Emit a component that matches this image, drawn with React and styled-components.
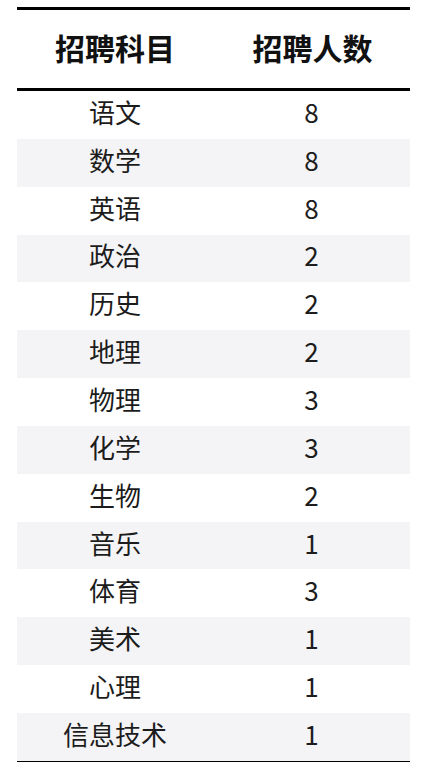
import styled, { createGlobalStyle } from 'styled-components';

const GlobalStyle = createGlobalStyle`
  html, body {
    margin: 0;
    padding: 0;
    background: #ffffff;
  }
  body {
    font-family: "Noto Sans CJK SC", "Noto Sans", sans-serif;
    color: #1a1a1a;
  }
`;

const Page = styled.div`
  width: 430px;
  height: 775px;
  padding: 7px 20px 0 17px;
  box-sizing: border-box;
`;

const Table = styled.div`
  width: 393px;
  border-top: 3px solid #000;
  border-bottom: 1px solid #000;
`;

const HeaderRow = styled.div`
  display: grid;
  grid-template-columns: 196px 197px;
  height: 78px;
  align-items: center;
  border-bottom: 3px solid #000;
`;

const HeadCell = styled.div`
  text-align: center;
  font-size: 30px;
  font-weight: 700;
  line-height: 1;
  color: #111;
  padding-bottom: 4px;
  padding-left: ${(p) => (p.$right ? '2px' : '0')};
`;

const Row = styled.div`
  display: grid;
  grid-template-columns: 196px 197px;
  height: 47.85px;
  align-items: center;
  background: ${(p) => (p.$shade ? '#f4f4f6' : '#ffffff')};
`;

const Cell = styled.div`
  text-align: center;
  font-size: 26px;
  font-weight: 400;
  line-height: 1;
  color: #1c1c1c;
  padding-bottom: 6px;
`;

const rows = [
  ['语文', 8],
  ['数学', 8],
  ['英语', 8],
  ['政治', 2],
  ['历史', 2],
  ['地理', 2],
  ['物理', 3],
  ['化学', 3],
  ['生物', 2],
  ['音乐', 1],
  ['体育', 3],
  ['美术', 1],
  ['心理', 1],
  ['信息技术', 1],
];

export default function App() {
  return (
    <Page>
      <GlobalStyle />
      <Table>
        <HeaderRow>
          <HeadCell>招聘科目</HeadCell>
          <HeadCell $right>招聘人数</HeadCell>
        </HeaderRow>
        {rows.map(([name, n], i) => (
          <Row key={name} $shade={i % 2 === 1}>
            <Cell>{name}</Cell>
            <Cell>{n}</Cell>
          </Row>
        ))}
      </Table>
    </Page>
  );
}
